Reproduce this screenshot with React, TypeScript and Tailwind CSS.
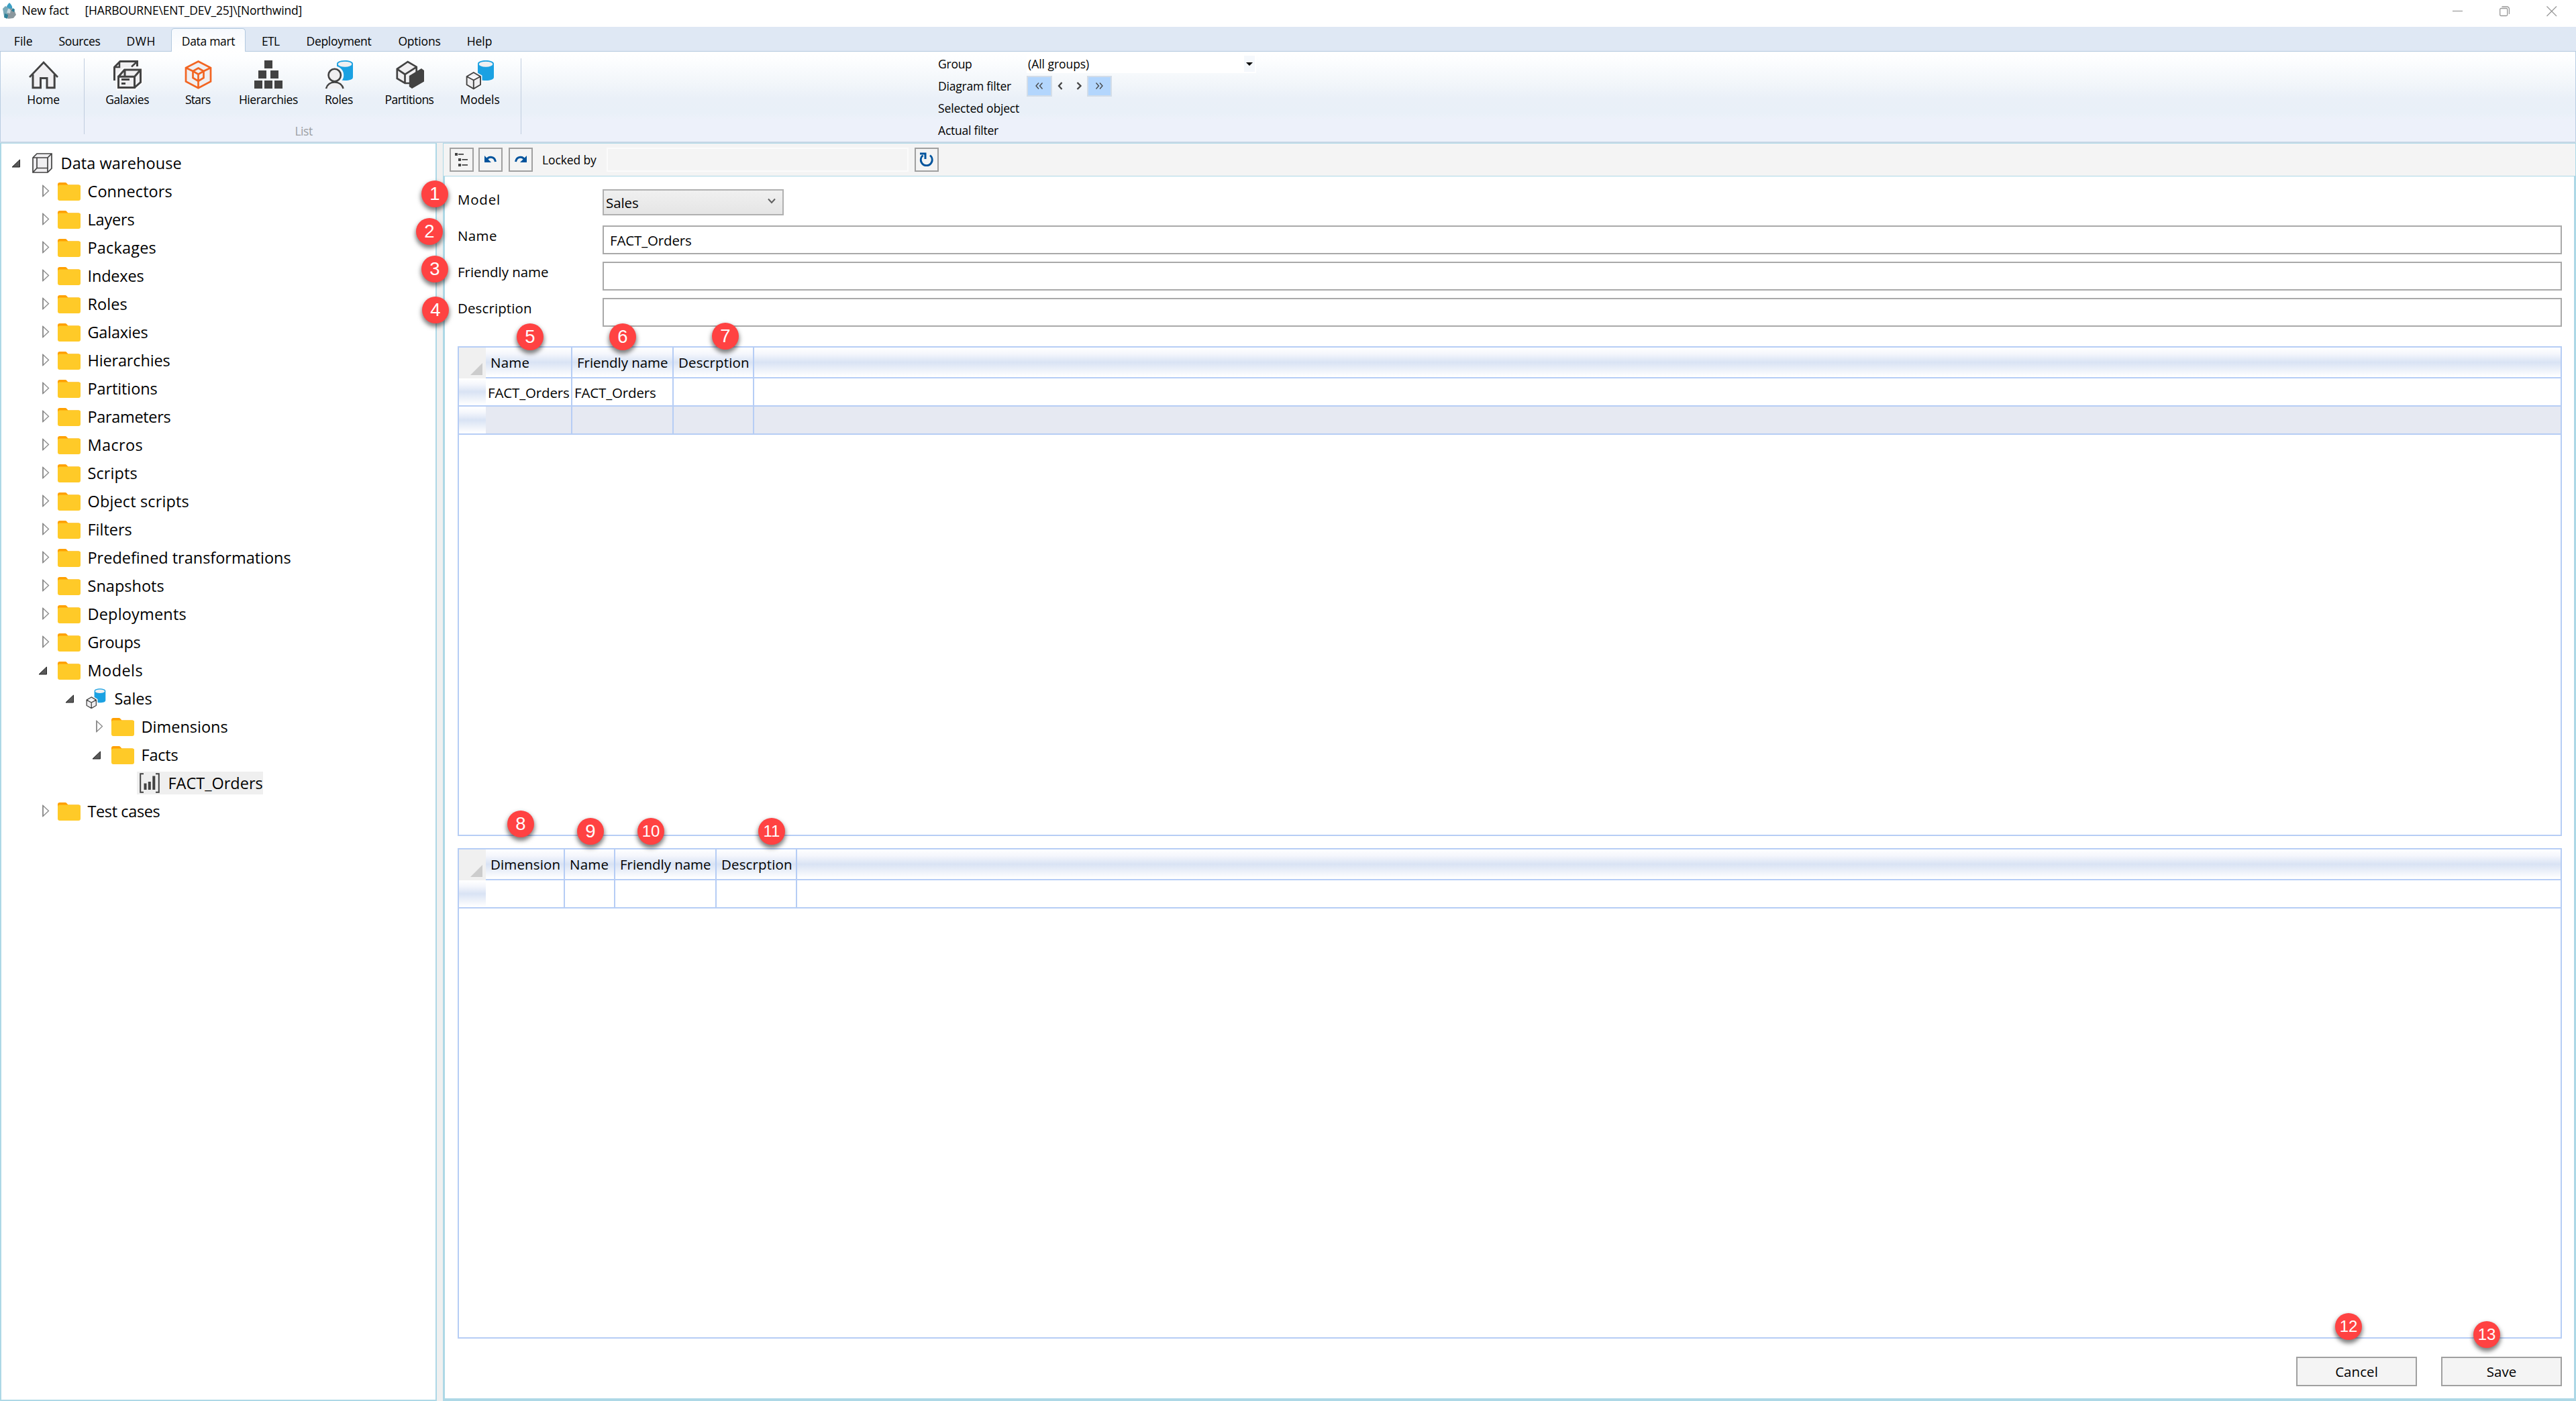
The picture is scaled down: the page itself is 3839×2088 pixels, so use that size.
import React from 'react';

const FONT = '"Open Sans"';
let ctx: CanvasRenderingContext2D | null = null;

/** Letter spacing that makes `text` fill an ink width of `w` pixels. */
function spacing(text: string, size: number, w: number, font: string) {
  if (!ctx) ctx = document.createElement('canvas').getContext('2d');
  if (!ctx) return 0;
  ctx.font = `${size}px ${font}`;
  const m = ctx.measureText(text);
  const ink = m.actualBoundingBoxRight + m.actualBoundingBoxLeft;
  return text.length > 1 ? (w - ink) / (text.length - 1) : 0;
}

const sizes = {
  s: { px: 17.5, cls: 'text-[17.5px]' },
  m: { px: 20.5, cls: 'text-[20.5px]' },
  l: { px: 23.5, cls: 'text-[23.5px]' },
};

function T({ t, w, s = 's', className = '' }: { t: string; w: number; s?: 's' | 'm' | 'l'; className?: string }) {
  const z = sizes[s];
  return (
    <span
      className={`block whitespace-pre leading-[30px] ${z.cls} ${className}`}
      style={{ letterSpacing: `${spacing(t, z.px, w, FONT).toFixed(3)}px` }}
    >
      {t}
    </span>
  );
}

/* ---------- icons ---------- */

const DARK = '#424242';
const FACE = '#f0eff1';

function Svg({ children }: { children: React.ReactNode }) {
  return (
    <svg viewBox="0 0 48 48" className="block size-12 shrink-0" fill="none" strokeLinejoin="miter">
      {children}
    </svg>
  );
}

const HomeIcon = () => (
  <Svg>
    <path d="M7.5 24 24 6l16.500 18v20H29V29.500H19.500V44H7.500z" fill={FACE} />
    <path d="M3 28 24 6l21 22" stroke={DARK} strokeWidth="2.600" />
    <path d="M8 24v19.700h11.500V29.500h9.500v14.200h11.200V24" stroke={DARK} strokeWidth="3" />
  </Svg>
);

const GalaxiesIcon = () => (
  <Svg>
    <path d="M4.500 13 12 4.500h26v10L20 15 9 26H4.500z" fill={FACE} />
    <path d="M4.500 33V13L13 4.500h25.500V12" stroke={DARK} strokeWidth="3" />
    <path d="M4.500 13H12V5M38 5l-8 7.500" stroke={DARK} strokeWidth="2.500" />
    <path d="M9.500 26.500 19 16.500h24.500V36L35 44.500H10.500z" fill={FACE} stroke="#fbfbfd" strokeWidth="6" />
    <path d="M10.500 27.200h24v16.300h-24zM10.500 27.200 19.500 17h24v18.500l-9 8M34.500 27.200l9-10.200M20 17v10" fill={FACE} stroke={DARK} strokeWidth="3" />
    <path d="M15 31.500h12M15 37.500h6" stroke={DARK} strokeWidth="3" />
  </Svg>
);

const StarsIcon = () => (
  <Svg>
    <path d="M24.500 4.500 43 14v20.500l-18.500 9.700L6 34.500V14z" fill={FACE} stroke="#f26522" strokeWidth="2.700" />
    <path d="M24.500 14.500 32.500 19v10l-8 5-8-5V19zM16.500 19l8 4.700 8-4.700M24.500 23.700V44M6 14l10.500 5M43 14l-10.500 5" stroke="#f26522" strokeWidth="2.700" />
  </Svg>
);

const HierarchiesIcon = () => (
  <Svg>
    <path d="M18 3h12v12H18zM9 18h12v12H9zM27 18h12v12H27zM3 33h12v12H3zM18 33h12v12H18zM33 33h12v12H33z" fill={DARK} />
  </Svg>
);

const Cylinder = () => (
  <>
    <path d="M21 8c0-6.700 24-6.700 24 0v20c0 3.500-5 5-12 5s-12-1.500-12-5z" fill="#1ba1e2" />
    <ellipse cx="33" cy="8.700" rx="10.300" ry="4" fill={FACE} />
  </>
);

const RolesIcon = () => (
  <Svg>
    <Cylinder />
    <circle cx="17.700" cy="25" r="11" fill="#f8f9fc" stroke="#f8f9fc" strokeWidth="5" />
    <path d="M5.200 45c1.500-6 7-9.300 12.500-9.300S29 39 30.200 45z" fill={FACE} />
    <path d="M5 45c1.500-6 6.500-9.500 12.700-9.500S29 39 30.500 45" stroke={DARK} strokeWidth="2.600" />
    <circle cx="17.700" cy="25" r="9.200" fill={FACE} stroke={DARK} strokeWidth="2.600" />
  </Svg>
);

const PartitionsIcon = () => (
  <Svg>
    <path d="M21.700 5 34.500 13v10L17.500 37 6 30V16z" fill={FACE} />
    <path d="M24 37 17.500 37 5.800 30V15.800L21.700 5l13 7.700V22M5.800 15.800l11.700 8V37M17.500 23.800l17.200-11" stroke={DARK} strokeWidth="2.700" />
    <path d="m42 15 4 3v16.500L28 45l-4.200-3V26z" fill={DARK} />
  </Svg>
);

const ModelsIcon = () => (
  <Svg>
    <Cylinder />
    <path d="m14.800 21 10.200 6v12.300l-10.200 6-10.200-6V27z" fill="#f8f9fc" stroke="#f8f9fc" strokeWidth="5" />
    <path d="m14.800 21 10.200 6v12.300l-10.200 6-10.200-6V27zM4.600 27l10.200 5.500L25 27M14.800 32.500v12.800" fill={FACE} stroke={DARK} strokeWidth="1.900" />
  </Svg>
);

const Folder = () => (
  <svg viewBox="0 0 34 27" className="block h-[27px] w-[34px]">
    <path d="M0 12V3a3 3 0 0 1 3-3h8a3 3 0 0 1 2.500 1.200L15.500 3.500H31a3 3 0 0 1 3 3V12z" fill="#ffa000" />
    <path d="M0 6.500a3 3 0 0 1 3-3h28a3 3 0 0 1 3 3V24a3 3 0 0 1-3 3H3a3 3 0 0 1-3-3z" fill="#ffca28" />
  </svg>
);

const WarehouseIcon = () => (
  <svg viewBox="0 0 30 30" className="block size-[30px]" fill={FACE} stroke={DARK} strokeWidth="1.700">
    <path d="M1 7 7 1h22v22l-6 6H1zM1 7h22v22M23 7l6-6" />
    <path d="M7 7v15.500h16M7 22.500 1 29" fill="none" />
  </svg>
);

const SalesIcon = () => (
  <svg viewBox="3 2.500 43 43" className="block size-[30px]" fill="none">
    <Cylinder />
    <path d="m14.800 21 10.200 6v12.300l-10.200 6-10.200-6V27z" stroke="#fff" strokeWidth="6" />
    <path d="m14.800 21 10.200 6v12l-10.200 6-10.200-6V27zM4.600 27l10.200 5.500L25 27M14.800 32.500V45" fill={FACE} stroke={DARK} strokeWidth="1.800" />
  </svg>
);

const FactIcon = () => (
  <svg viewBox="0 0 30 30" className="block size-[30px]" fill="none">
    <path d="M6 1.200H1.200v27.600H6M24 1.200h4.800v27.600H24" stroke={DARK} strokeWidth="2" />
    <path d="M6.500 15.500h4V25h-4zM12.800 13h4v12h-4zM19.300 4.500h4V25h-4z" fill={DARK} />
  </svg>
);

/* ---------- tree ---------- */

type Node = [level: number, label: string, width: number, state: 'open' | 'closed' | 'leaf'];
const tree: Node[] = [
  [0, 'Data warehouse', 177, 'open'],
  [1, 'Connectors', 125, 'closed'],
  [1, 'Layers', 68, 'closed'],
  [1, 'Packages', 100, 'closed'],
  [1, 'Indexes', 82, 'closed'],
  [1, 'Roles', 57, 'closed'],
  [1, 'Galaxies', 89, 'closed'],
  [1, 'Hierarchies', 121, 'closed'],
  [1, 'Partitions', 102, 'closed'],
  [1, 'Parameters', 122, 'closed'],
  [1, 'Macros', 80, 'closed'],
  [1, 'Scripts', 73, 'closed'],
  [1, 'Object scripts', 150, 'closed'],
  [1, 'Filters', 64, 'closed'],
  [1, 'Predefined transformations', 301, 'closed'],
  [1, 'Snapshots', 113, 'closed'],
  [1, 'Deployments', 145, 'closed'],
  [1, 'Groups', 78, 'closed'],
  [1, 'Models', 80, 'open'],
  [2, 'Sales', 55, 'open'],
  [3, 'Dimensions', 127, 'closed'],
  [3, 'Facts', 53, 'open'],
  [4, 'FACT_Orders', 139, 'leaf'],
  [1, 'Test cases', 108, 'closed'],
];
const indent = ['pl-[12px]', 'pl-[52px]', 'pl-[92px]', 'pl-[132px]', 'pl-[172px]'];

function TreeRow({ node: [level, label, width, state] }: { node: Node }) {
  const icon =
    label === 'Data warehouse' ? <WarehouseIcon /> : label === 'Sales' ? <SalesIcon /> : state === 'leaf' ? <FactIcon /> : <Folder />;
  return (
    <div className={`flex h-[42px] items-center ${indent[level]}`}>
      <div className="w-[30px] shrink-0">
        {state === 'open' && (
          <svg viewBox="0 0 14 13" className="ml-[3px] h-[13px] w-[14px]">
            <path d="M1 12 12.500 1v11z" fill="#595959" stroke="#262626" strokeWidth="1" />
          </svg>
        )}
        {state === 'closed' && (
          <svg viewBox="0 0 11 19" className="ml-[8.500px] mt-px h-[19px] w-[11px] -translate-y-px">
            <path d="M1 1.500v16l8.500-8z" fill="#fff" stroke="#8a8a8a" strokeWidth="1.300" />
            <path d="M1 1v17" stroke="#8a8a8a" strokeWidth="1.600" />
          </svg>
        )}
      </div>
      <div className={`flex h-[34px] items-center gap-[8.500px] ${state === 'leaf' ? 'bg-[#efefef]' : ''}`}>
        <div className="flex w-[38px] justify-center">{icon}</div>
        <T t={label} w={width} s="l" />
      </div>
    </div>
  );
}

/* ---------- ribbon ---------- */

const tabs: [string, number, string][] = [
  ['File', 26, 'w-[66.500px] pl-px'],
  ['Sources', 62, 'w-[102px]'],
  ['DWH', 41, 'w-[81.500px]'],
  ['Data mart', 78.5, ''],
  ['ETL', 26, 'w-[66.500px]'],
  ['Deployment', 96, 'w-[137px]'],
  ['Options', 62, 'w-[103px]'],
  ['Help', 36, 'w-[76px]'],
];

const tools: [string, number, React.ReactNode][] = [
  ['Galaxies', 64, <GalaxiesIcon />],
  ['Stars', 38, <StarsIcon />],
  ['Hierarchies', 87, <HierarchiesIcon />],
  ['Roles', 41, <RolesIcon />],
  ['Partitions', 72, <PartitionsIcon />],
  ['Models', 58, <ModelsIcon />],
];

function Tool({ label, width, icon }: { label: string; width: number; icon: React.ReactNode }) {
  return (
    <button className="flex w-[105.100px] flex-col items-center">
      {icon}
      <T t={label} w={width} className="-mt-[2px]" />
    </button>
  );
}

function Ribbon() {
  return (
    <div className="flex h-[134px] border-x border-x-[#b9cde2] bg-[linear-gradient(to_bottom,#fff_0%,#fdfeff_8%,#f2f6fa_35%,#eaf0f8_52%,#e9f0f8_68%,#edf1fa_76%,#edf1fa_100%)] pt-[10px]">
      <div className="ml-[11px]">
        <Tool label="Home" width={47} icon={<HomeIcon />} />
      </div>
      <div className="ml-[8px] h-[113px] w-px bg-[#c0cddf]" />
      <div className="ml-[11px] flex h-[124px] w-[631px] flex-col">
        <div className="flex">
          {tools.map(([l, w, i]) => (
            <Tool key={l} label={l} width={w} icon={i} />
          ))}
        </div>
        <T t="List" w={25.5} className="mt-[17px] text-center text-[#9c9fa4]" />
      </div>
      <div className="ml-[8px] h-[113px] w-px bg-[#c0cddf]" />
      <div className="-mt-[7px] ml-[621px] grid auto-rows-[33px] grid-cols-[132px_1fr]">
        <div>
          <T t="Group" w={49} />
        </div>
        <div className="mt-[1px] flex h-[28px] w-[342px] items-center justify-between bg-white pl-[2px] pr-[2px]">
          <T t="(All groups)" w={91} />
          <div className="flex h-6 w-4 items-center justify-center bg-[#f5f8fc]">
            <svg viewBox="0 0 10 5" className="h-[5px] w-[10px]">
              <path d="M0 0h10L5 5z" fill="#000" />
            </svg>
          </div>
        </div>
        <div>
          <T t="Diagram filter" w={108} />
        </div>
        <div className="flex h-[30px] items-center">
          <Pager active>
            <path d="M6 1.500 2 6l4 4.500M11.500 1.500 7.500 6l4 4.500" />
          </Pager>
          <Pager>
            <path d="M8.500 1 4 6l4.500 5" strokeWidth="2.300" />
          </Pager>
          <Pager>
            <path d="m5.500 1 5 5-5 5" strokeWidth="2.300" />
          </Pager>
          <Pager active>
            <path d="M2.500 1.500 6.500 6l-4 4.500M8 1.500 12 6l-4 4.500" />
          </Pager>
        </div>
        <div>
          <T t="Selected object" w={121} />
        </div>
        <div />
        <div>
          <T t="Actual filter" w={90} />
        </div>
      </div>
    </div>
  );
}

function Pager({ active, children }: { active?: boolean; children: React.ReactNode }) {
  return (
    <button
      className={
        active
          ? 'flex h-[31px] w-[37.500px] items-center justify-center border-2 border-[#d3dde8] bg-[#b3d6fd]'
          : 'flex h-[31px] w-[26px] items-center justify-center'
      }
    >
      <svg viewBox="0 0 14 12" className="h-[12px] w-[14px]" fill="none" stroke="#424242" strokeWidth="1.300">
        {children}
      </svg>
    </button>
  );
}

/* ---------- tables ---------- */

type Cell = { cls: string; t?: string; w?: number };

function HeaderRow({ cells }: { cells: Cell[] }) {
  return (
    <div className="flex h-[46px]">
      <div className="flex w-[40px] shrink-0 items-end justify-end bg-[#f0f0f0] pb-[5px] pr-[5px]">
        <svg viewBox="0 0 18 18" className="size-[18px]">
          <path d="M0 18 18 0v18z" fill="#ccc" />
        </svg>
      </div>
      <div className="flex grow border-b-2 border-[#b6cdf5] bg-[linear-gradient(to_bottom,#fff_0%,#f4f6fc_22%,#d9e3f4_50%,#eff3fa_78%,#fff_98%)]">
        {cells.map((c) => (
          <div key={c.t} className={`flex items-center border-r-2 border-[#b6cdf5] pl-[7px] ${c.cls}`}>
            <T t={c.t ?? ''} w={c.w ?? 0} s="m" />
          </div>
        ))}
      </div>
    </div>
  );
}

function DataRow({ cells, shaded }: { cells: Cell[]; shaded?: boolean }) {
  return (
    <div className="flex h-[42px] border-b-2 border-[#b6cdf5]">
      <div className="w-[40px] shrink-0 bg-[linear-gradient(to_bottom,#fff_2%,#f4f6fc_22%,#d9e3f4_50%,#eff3fa_78%,#fff_98%)]" />
      <div className={`flex grow ${shaded ? 'bg-[#e6e9f2]' : ''}`}>
        {cells.map((c, i) => (
          <div key={i} className={`flex items-center border-r-2 border-[#b6cdf5] pl-[3px] pt-[1px] ${c.cls}`}>
            {c.t && <T t={c.t} w={c.w ?? 0} s="m" />}
          </div>
        ))}
      </div>
    </div>
  );
}

/* ---------- form ---------- */

function Field({ label, width, children }: { label: string; width: number; children: React.ReactNode }) {
  return (
    <div className="flex h-[54px]">
      <div className="w-[216px] shrink-0">
        <T t={label} w={width} s="m" />
      </div>
      {children}
    </div>
  );
}

const inputCls = 'flex h-[43px] grow items-center border-2 border-[#a9a9a9] bg-white pl-[9px]';

function IconButton({ className, children }: { className: string; children: React.ReactNode }) {
  return <button className={`flex size-9 items-center justify-center border-2 border-[#a0a0a0] ${className}`}>{children}</button>;
}

/* ---------- callouts ---------- */

const callouts: [number, string][] = [
  [1, 'left-[628px] top-[269px]'],
  [2, 'left-[620px] top-[325px]'],
  [3, 'left-[628px] top-[381px]'],
  [4, 'left-[629px] top-[442px]'],
  [5, 'left-[770px] top-[482px]'],
  [6, 'left-[908px] top-[482px]'],
  [7, 'left-[1061px] top-[481px]'],
  [8, 'left-[756px] top-[1208px]'],
  [9, 'left-[860px] top-[1219px]'],
  [10, 'left-[950px] top-[1219px]'],
  [11, 'left-[1130px] top-[1219px]'],
  [12, 'left-[3480px] top-[1957px]'],
  [13, 'left-[3686px] top-[1969px]'],
];

export default function App() {
  return (
    <div className="relative flex h-[2088px] w-[3839px] flex-col overflow-hidden bg-[#f0f0f0] font-['Open_Sans',sans-serif] text-black">
      <header className="flex h-10 shrink-0 justify-between bg-white">
        <div className="flex">
          <svg viewBox="0 0 21 24" className="ml-[3px] mt-[4px] h-[24px] w-[21px]">
            <path d="M11 0c3 3 5 6 4 9H7c-1-3 1-6 4-9z" fill="#3b9fc4" />
            <path d="M1 9 5 5l5 3 1 6-3 9-5-3z" fill="#7aa9b8" />
            <path d="m12 8 6 3 3 7-4 5-8 1-2-6z" fill="#8b979d" />
            <path d="m4 16 5 2-1 6-5-2zM16 8l3 2-1 4-4-2z" fill="#2d7f97" />
            <path d="m9 9 4 2-1 5-5-1z" fill="#c9d5da" />
          </svg>
          <T t="New fact" w={69} className="ml-[8.500px] w-[94px]" />
          <T t="[HARBOURNE\ENT_DEV_25]\[Northwind]" w={322} />
        </div>
        <div className="flex gap-[54px] pr-[28px] pt-[9px]">
          <svg viewBox="0 0 16 16" className="size-4" stroke="#999" fill="none" strokeWidth="1.200">
            <path d="M0 7.500h15" />
          </svg>
          <svg viewBox="0 0 16 16" className="size-4" stroke="#999" fill="none" strokeWidth="1.300">
            <rect x=".700" y="3.500" width="11" height="11" rx="1.500" />
            <path d="M3.500 1h7.500a3.500 3.500 0 0 1 3.500 3.500V12" />
          </svg>
          <svg viewBox="0 0 16 16" className="size-4" stroke="#999" fill="none" strokeWidth="1.300">
            <path d="m.500.500 14.500 14.500M15 .500.500 15" />
          </svg>
        </div>
      </header>

      <nav className="flex h-[37px] shrink-0 border-b border-[#b3c9df] bg-[#dfe8f4] pl-px pt-[2px]">
        {tabs.map(([label, w, box]) => (
          <button
            key={label}
            className={
              label === 'Data mart'
                ? 'ml-[4px] mr-[4px] flex h-[35px] w-[111px] justify-center rounded-t-[5px] border border-b-0 border-[#b3c9df] bg-[linear-gradient(#f6f9fd,#fff)] pt-[3px]'
                : `flex justify-center pt-[4px] ${box}`
            }
          >
            <T t={label} w={w} />
          </button>
        ))}
      </nav>

      <Ribbon />
      <div className="h-[2px] shrink-0 bg-[#c8d8e6]" />

      <div className="flex min-h-0 grow">
        <aside className="w-[651px] shrink-0 border-2 border-t border-[#add8e6] bg-white pt-2">
          {tree.map((n) => (
            <TreeRow key={n[0] + n[1]} node={n} />
          ))}
        </aside>

        <main className="ml-[9px] flex grow flex-col">
          <div className="flex h-[49.500px] shrink-0 border border-[#add8e6] bg-[#f4f4f4] pl-[9px] pt-[6px]">
            <IconButton className="">
              <svg viewBox="0 0 22 22" className="size-[22px]" fill="#424242">
                <path d="M1 1h4v4H1zM6 2h8v1.800H6zM6 9h4v4H6zM11.500 10H20v1.800h-8.500zM6 17h4v4H6zM11.500 18H20v1.800h-8.500z" />
              </svg>
            </IconButton>
            <IconButton className="ml-[7px]">
              <svg viewBox="0 0 20 14" className="h-[14px] w-[20px]" fill="none">
                <path d="M4 8C6 1.500 16 1 17.500 10" stroke="#00539c" strokeWidth="3" />
                <path d="M1 1v10h10z" fill="#00539c" />
              </svg>
            </IconButton>
            <IconButton className="ml-[9px]">
              <svg viewBox="0 0 20 14" className="h-[14px] w-[20px]" fill="none">
                <path d="M16 8C14 1.500 4 1 2.500 10" stroke="#00539c" strokeWidth="3" />
                <path d="M19 1v10H9z" fill="#00539c" />
              </svg>
            </IconButton>
            <div className="ml-[14px] w-[96px] pt-[3px]">
              <T t="Locked by" w={80} />
            </div>
            <div className="h-9 w-[450px] border-2 border-[#fbfbfb]" />
            <IconButton className="ml-[9px]">
              <svg viewBox="0 0 22 22" className="size-[22px]" fill="none">
                <path d="M5.500 4.500a8.500 8.500 0 1 0 10.500 0" stroke="#00539c" strokeWidth="2.800" />
                <path d="M1 2h8v8" stroke="#00539c" strokeWidth="3" />
              </svg>
            </IconButton>
          </div>

          <div className="-mt-px flex grow flex-col border-x-[3px] border-b-4 border-t border-[#add8e6] bg-white pl-[19px] pr-[18px] pt-[19.500px]">
            <Field label="Model" width={60}>
              <div className="flex h-[39px] w-[270px] items-center justify-between border-2 border-[#b0b0b0] bg-[linear-gradient(#f0f0f0,#e5e5e5)] pl-[3px] pr-[10px] pt-px">
                <T t="Sales" w={47} s="m" />
                <svg viewBox="0 0 12 9" className="mb-[6px] h-[9px] w-[12px]">
                  <path d="m1 1.500 5 5.500 5-5.500" fill="none" stroke="#606060" strokeWidth="2" />
                </svg>
              </div>
            </Field>
            <Field label="Name" width={56}>
              <div className={inputCls}>
                <T t="FACT_Orders" w={119} s="m" />
              </div>
            </Field>
            <Field label="Friendly name" width={133}>
              <div className={inputCls} />
            </Field>
            <Field label="Description" width={107}>
              <div className={inputCls} />
            </Field>

            <section className="mt-[18px] h-[730px] shrink-0 border-2 border-[#b6cdf5]">
              <HeaderRow
                cells={[
                  { cls: 'w-[129px]', t: 'Name', w: 55.5 },
                  { cls: 'w-[151px]', t: 'Friendly name', w: 133 },
                  { cls: 'w-[120px]', t: 'Descrption', w: 102 },
                ]}
              />
              <DataRow
                cells={[
                  { cls: 'w-[129px]', t: 'FACT_Orders', w: 119 },
                  { cls: 'w-[151px]', t: 'FACT_Orders', w: 119 },
                  { cls: 'w-[120px]' },
                ]}
              />
              <DataRow shaded cells={[{ cls: 'w-[129px]' }, { cls: 'w-[151px]' }, { cls: 'w-[120px]' }]} />
            </section>

            <section className="mt-[18px] h-[731px] shrink-0 border-2 border-[#b6cdf5]">
              <HeaderRow
                cells={[
                  { cls: 'w-[118px]', t: 'Dimension', w: 100.5 },
                  { cls: 'w-[75px]', t: 'Name', w: 55.5 },
                  { cls: 'w-[151px]', t: 'Friendly name', w: 133 },
                  { cls: 'w-[120px]', t: 'Descrption', w: 102 },
                ]}
              />
              <DataRow cells={[{ cls: 'w-[118px]' }, { cls: 'w-[75px]' }, { cls: 'w-[151px]' }, { cls: 'w-[120px]' }]} />
            </section>

            <div className="mt-[27px] flex justify-end gap-9">
              <button className="flex h-[44px] w-[180px] items-center justify-center border-2 border-[#a0a0a0] bg-[#f4f4f4]">
                <T t="Cancel" w={61.5} s="m" />
              </button>
              <button className="flex h-[44px] w-[180px] items-center justify-center border-2 border-[#a0a0a0] bg-[#f4f4f4]">
                <T t="Save" w={43} s="m" />
              </button>
            </div>
          </div>
        </main>
      </div>

      {callouts.map(([n, pos]) => (
        <div
          key={n}
          className={`absolute flex size-10 items-center justify-center rounded-full bg-[#ff4242] font-['Liberation_Sans',Arial,sans-serif] text-white shadow-[0_4px_6px_1px_rgba(0,0,0,0.5)] ${pos} ${
            n > 9 ? 'text-[24px]' : 'text-[27.500px]'
          }`}
        >
          {n}
        </div>
      ))}
    </div>
  );
}
